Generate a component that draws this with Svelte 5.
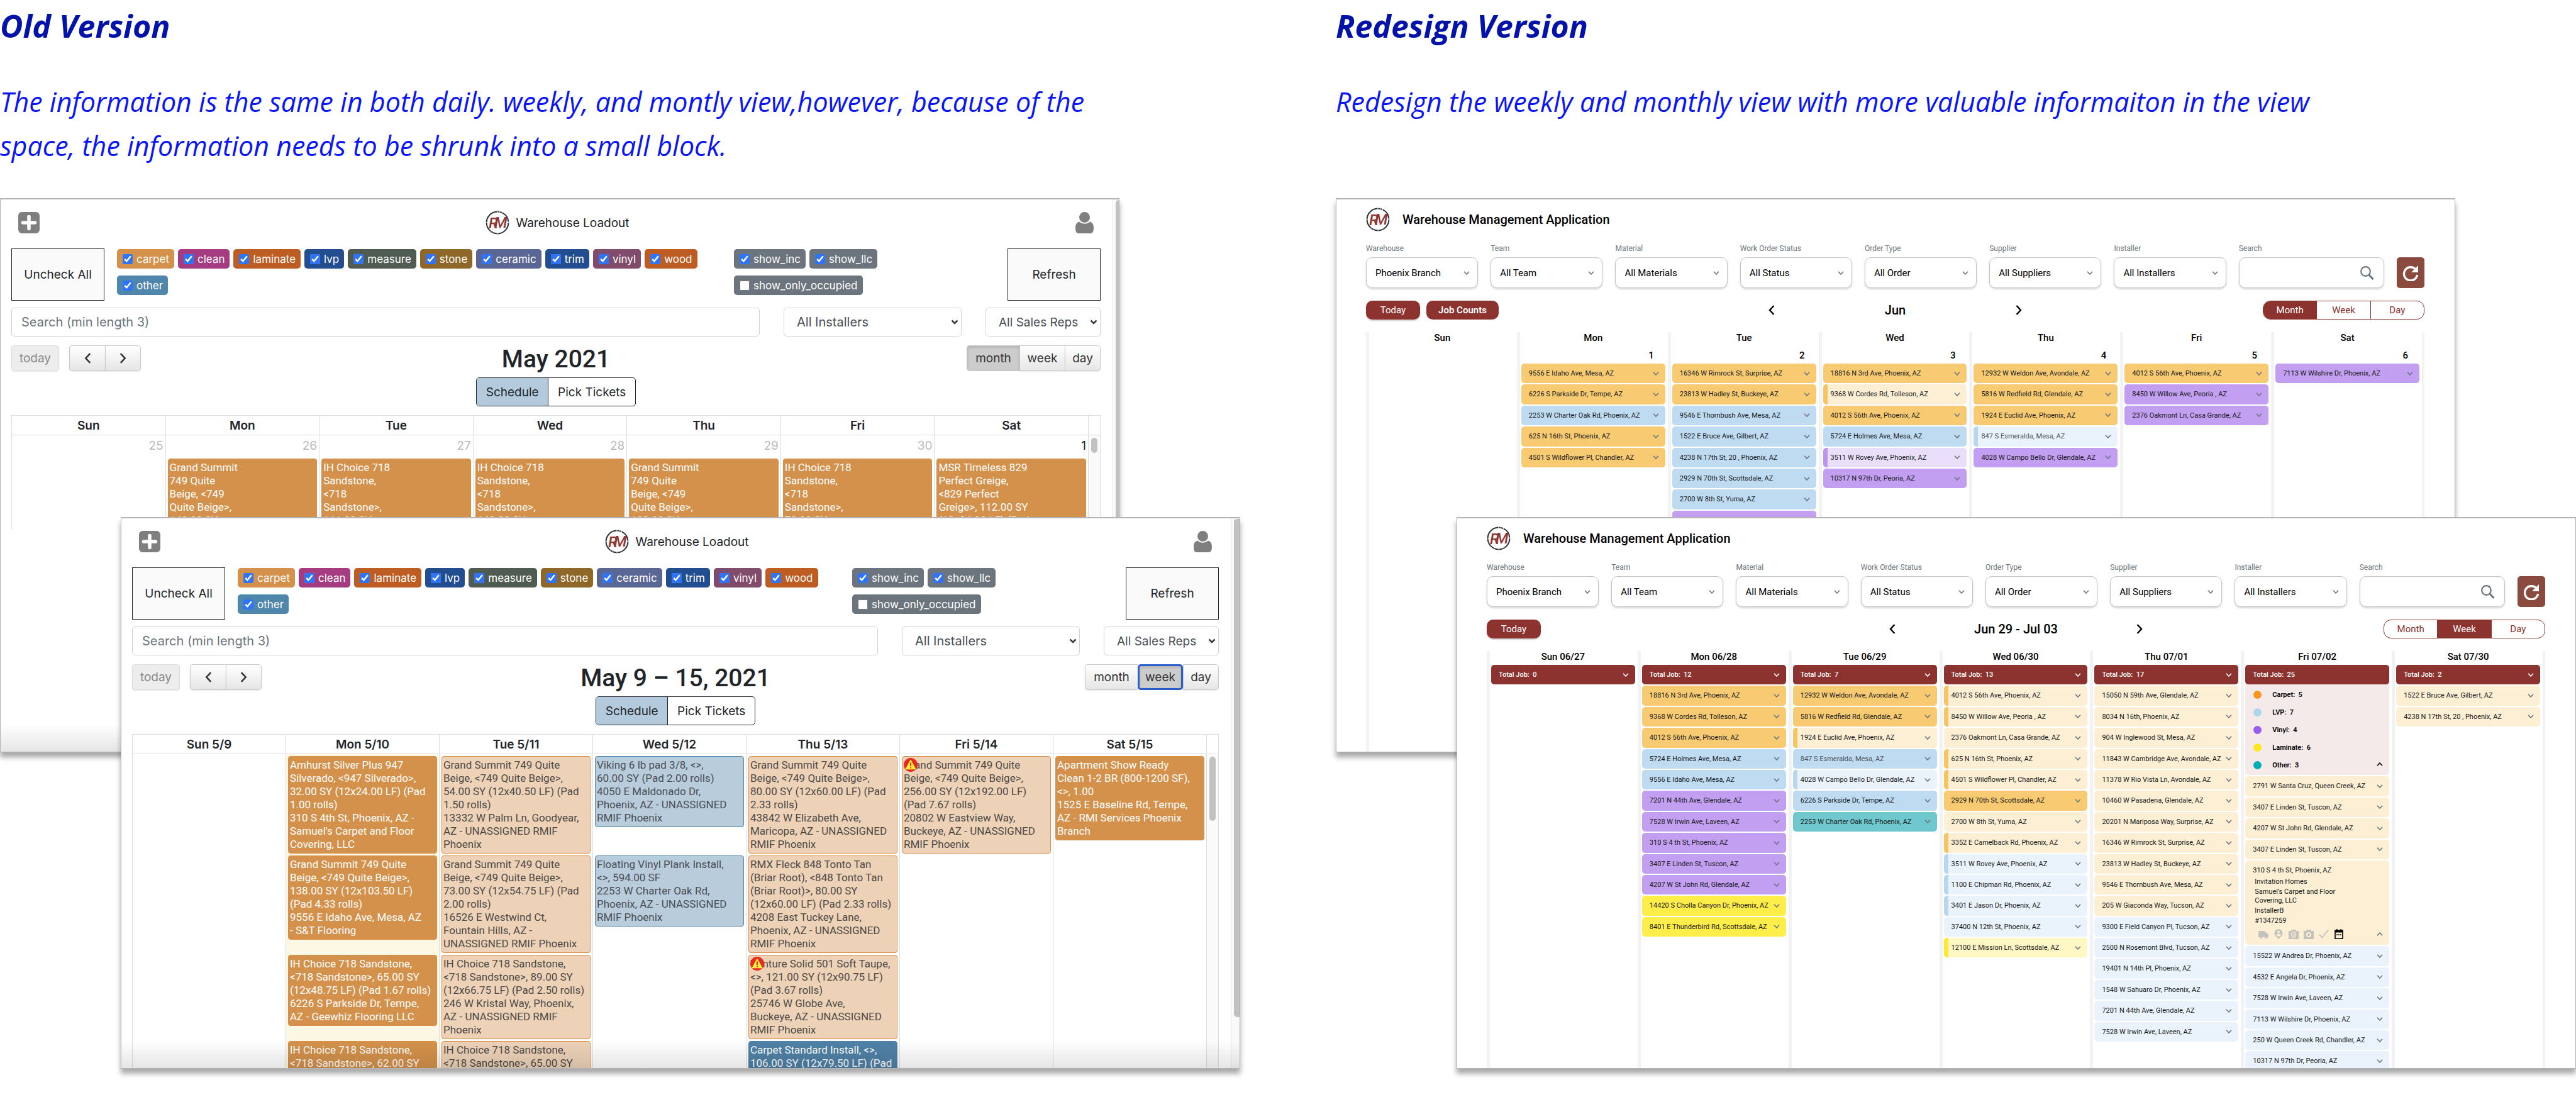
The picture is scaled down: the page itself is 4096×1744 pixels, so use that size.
<script>
  const kinds = [
    { name: 'carpet', color: '#d3914b' },
    { name: 'clean', color: '#a53c82' },
    { name: 'laminate', color: '#bd5d24' },
    { name: 'lvp', color: '#224d8f' },
    { name: 'measure', color: '#505c52' },
    { name: 'stone', color: '#8f6729' },
    { name: 'ceramic', color: '#5a6794' },
    { name: 'trim', color: '#224d8f' },
    { name: 'vinyl', color: '#814b6b' },
    { name: 'wood', color: '#bd5d24' },
    { name: 'other', color: '#4f86ab' }
  ];
  const options = [
    { name: 'show_inc', on: true },
    { name: 'show_llc', on: true },
    { name: 'show_only_occupied', on: false }
  ];

  const oldMonth = {
    id: 'old-month',
    title: 'May 2021',
    view: 'month',
    days: ['Sun', 'Mon', 'Tue', 'Wed', 'Thu', 'Fri', 'Sat'],
    rows: [
      [
        { num: '25', out: true },
        { num: '26', out: true, tone: 'solid', text: 'Grand Summit\n749 Quite\nBeige, <749\nQuite Beige>,\n140.00 SY' },
        { num: '27', out: true, tone: 'solid', text: 'IH Choice 718\nSandstone,\n<718\nSandstone>,\n111.00 SY' },
        { num: '28', out: true, tone: 'solid', text: 'IH Choice 718\nSandstone,\n<718\nSandstone>,\n140.00 SY' },
        { num: '29', out: true, tone: 'solid', text: 'Grand Summit\n749 Quite\nBeige, <749\nQuite Beige>,\n100.00 SY' },
        { num: '30', out: true, tone: 'solid', text: 'IH Choice 718\nSandstone,\n<718\nSandstone>,\n70.00 SY' },
        { num: '1', tone: 'solid', text: 'MSR Timeless 829\nPerfect Greige,\n<829 Perfect\nGreige>, 112.00 SY\n(12x84.00 LF) (Pad' }
      ]
    ]
  };

  const oldWeek = {
    id: 'old-week',
    title: 'May 9 – 15, 2021',
    view: 'week',
    days: ['Sun 5/9', 'Mon 5/10', 'Tue 5/11', 'Wed 5/12', 'Thu 5/13', 'Fri 5/14', 'Sat 5/15'],
    rows: [
      [
        {},
        { tone: 'solid', text: "Amhurst Silver Plus 947\nSilverado, <947 Silverado>,\n32.00 SY (12x24.00 LF) (Pad\n1.00 rolls)\n310 S 4th St, Phoenix, AZ -\nSamuel's Carpet and Floor\nCovering, LLC" },
        { tone: 'pale', text: 'Grand Summit 749 Quite\nBeige, <749 Quite Beige>,\n54.00 SY (12x40.50 LF) (Pad\n1.50 rolls)\n13332 W Palm Ln, Goodyear,\nAZ - UNASSIGNED RMIF\nPhoenix' },
        { tone: 'sky', text: 'Viking 6 lb pad 3/8, <>,\n60.00 SY (Pad 2.00 rolls)\n4050 E Maldonado Dr,\nPhoenix, AZ - UNASSIGNED\nRMIF Phoenix' },
        { tone: 'pale', text: 'Grand Summit 749 Quite\nBeige, <749 Quite Beige>,\n80.00 SY (12x60.00 LF) (Pad\n2.33 rolls)\n43842 W Elizabeth Ave,\nMaricopa, AZ - UNASSIGNED\nRMIF Phoenix' },
        { tone: 'pale', warn: true, text: 'Grand Summit 749 Quite\nBeige, <749 Quite Beige>,\n256.00 SY (12x192.00 LF)\n(Pad 7.67 rolls)\n20802 W Eastview Way,\nBuckeye, AZ - UNASSIGNED\nRMIF Phoenix' },
        { tone: 'solid', text: 'Apartment Show Ready\nClean 1-2 BR (800-1200 SF),\n<>, 1.00\n1525 E Baseline Rd, Tempe,\nAZ - RMI Services Phoenix\nBranch' }
      ],
      [
        {},
        { tone: 'solid', text: 'Grand Summit 749 Quite\nBeige, <749 Quite Beige>,\n138.00 SY (12x103.50 LF)\n(Pad 4.33 rolls)\n9556 E Idaho Ave, Mesa, AZ\n- S&T Flooring' },
        { tone: 'pale', text: 'Grand Summit 749 Quite\nBeige, <749 Quite Beige>,\n73.00 SY (12x54.75 LF) (Pad\n2.00 rolls)\n16526 E Westwind Ct,\nFountain Hills, AZ -\nUNASSIGNED RMIF Phoenix' },
        { tone: 'sky', text: 'Floating Vinyl Plank Install,\n<>, 594.00 SF\n2253 W Charter Oak Rd,\nPhoenix, AZ - UNASSIGNED\nRMIF Phoenix' },
        { tone: 'pale', text: 'RMX Fleck 848 Tonto Tan\n(Briar Root), <848 Tonto Tan\n(Briar Root)>, 80.00 SY\n(12x60.00 LF) (Pad 2.33 rolls)\n4208 East Tuckey Lane,\nPhoenix, AZ - UNASSIGNED\nRMIF Phoenix' },
        {},
        {}
      ],
      [
        {},
        { tone: 'solid', text: 'IH Choice 718 Sandstone,\n<718 Sandstone>, 65.00 SY\n(12x48.75 LF) (Pad 1.67 rolls)\n6226 S Parkside Dr, Tempe,\nAZ - Geewhiz Flooring LLC' },
        { tone: 'pale', text: 'IH Choice 718 Sandstone,\n<718 Sandstone>, 89.00 SY\n(12x66.75 LF) (Pad 2.50 rolls)\n246 W Kristal Way, Phoenix,\nAZ - UNASSIGNED RMIF\nPhoenix' },
        {},
        { tone: 'pale', warn: true, text: 'Venture Solid 501 Soft Taupe,\n<>, 121.00 SY (12x90.75 LF)\n(Pad 3.67 rolls)\n25746 W Globe Ave,\nBuckeye, AZ - UNASSIGNED\nRMIF Phoenix' },
        {},
        {}
      ],
      [
        {},
        { tone: 'solid', text: 'IH Choice 718 Sandstone,\n<718 Sandstone>, 62.00 SY' },
        { tone: 'pale', text: 'IH Choice 718 Sandstone,\n<718 Sandstone>, 65.00 SY' },
        {},
        { tone: 'blue', text: 'Carpet Standard Install, <>,\n106.00 SY (12x79.50 LF) (Pad' },
        {},
        {}
      ]
    ]
  };

  const filters = [
    ['Warehouse', 'Phoenix Branch'],
    ['Team', 'All Team'],
    ['Material', 'All Materials'],
    ['Work Order Status', 'All Status'],
    ['Order Type', 'All Order'],
    ['Supplier', 'All Suppliers'],
    ['Installer', 'All Installers']
  ];

  const jobs = (tone, ...list) => list.map((address) => ({ tone, address }));

  const newMonth = {
    id: 'new-month',
    title: 'Jun',
    view: 'Month',
    days: [
      { name: 'Sun', jobs: [] },
      {
        name: 'Mon',
        num: 1,
        jobs: [
          ...jobs('amber', '9556 E Idaho Ave, Mesa, AZ', '6226 S Parkside Dr, Tempe, AZ'),
          ...jobs('sky', '2253 W Charter Oak Rd, Phoenix, AZ'),
          ...jobs('amber', '625 N 16th St, Phoenix, AZ', '4501 S Wildflower Pl, Chandler, AZ')
        ]
      },
      {
        name: 'Tue',
        num: 2,
        jobs: [
          ...jobs('amber', '16346 W Rimrock St, Surprise, AZ', '23813 W Hadley St, Buckeye, AZ'),
          ...jobs('sky', '9546 E Thornbush Ave, Mesa, AZ', '1522 E Bruce Ave, Gilbert, AZ', '4238 N 17th St, 20 , Phoenix, AZ', '2929 N 70th St, Scottsdale, AZ', '2700 W 8th St, Yuma, AZ'),
          ...jobs('violet', '7201 N 44th Ave, Glendale, AZ')
        ]
      },
      {
        name: 'Wed',
        num: 3,
        jobs: [
          ...jobs('amber', '18816 N 3rd Ave, Phoenix, AZ'),
          ...jobs('amber-light stripe', '9368 W Cordes Rd, Tolleson, AZ'),
          ...jobs('amber', '4012 S 56th Ave, Phoenix, AZ'),
          ...jobs('sky', '5724 E Holmes Ave, Mesa, AZ'),
          ...jobs('violet-light stripe', '3511 W Rovey Ave, Phoenix, AZ'),
          ...jobs('violet', '10317 N 97th Dr, Peoria, AZ')
        ]
      },
      {
        name: 'Thu',
        num: 4,
        jobs: [
          ...jobs('amber', '12932 W Weldon Ave, Avondale, AZ', '5816 W Redfield Rd, Glendale, AZ', '1924 E Euclid Ave, Phoenix, AZ'),
          ...jobs('sky-light stripe muted', '847 S Esmeralda, Mesa, AZ'),
          ...jobs('violet', '4028 W Campo Bello Dr, Glendale, AZ')
        ]
      },
      {
        name: 'Fri',
        num: 5,
        jobs: [
          ...jobs('amber', '4012 S 56th Ave, Phoenix, AZ'),
          ...jobs('violet', '8450 W Willow Ave, Peoria , AZ', '2376 Oakmont Ln, Casa Grande, AZ')
        ]
      },
      { name: 'Sat', num: 6, jobs: jobs('violet', '7113 W Wilshire Dr, Phoenix, AZ') }
    ]
  };

  const newWeek = {
    id: 'new-week',
    title: 'Jun 29 - Jul 03',
    view: 'Week',
    days: [
      { name: 'Sun 06/27', total: 0, jobs: [] },
      {
        name: 'Mon 06/28',
        total: 12,
        jobs: [
          ...jobs('amber', '18816 N 3rd Ave, Phoenix, AZ', '9368 W Cordes Rd, Tolleson, AZ', '4012 S 56th Ave, Phoenix, AZ'),
          ...jobs('sky', '5724 E Holmes Ave, Mesa, AZ', '9556 E Idaho Ave, Mesa, AZ'),
          ...jobs('violet', '7201 N 44th Ave, Glendale, AZ', '7528 W Irwin Ave, Laveen, AZ', '310 S 4 th St, Phoenix, AZ', '3407 E Linden St, Tuscon, AZ', '4207 W St John Rd, Glendale, AZ'),
          ...jobs('lemon', '14420 S Cholla Canyon Dr, Phoenix, AZ', '8401 E Thunderbird Rd, Scottsdale, AZ')
        ]
      },
      {
        name: 'Tue 06/29',
        total: 7,
        jobs: [
          ...jobs('amber', '12932 W Weldon Ave, Avondale, AZ', '5816 W Redfield Rd, Glendale, AZ'),
          ...jobs('amber-light stripe', '1924 E Euclid Ave, Phoenix, AZ'),
          ...jobs('sky muted', '847 S Esmeralda, Mesa, AZ'),
          ...jobs('sky-light stripe', '4028 W Campo Bello Dr, Glendale, AZ'),
          ...jobs('sky', '6226 S Parkside Dr, Tempe, AZ'),
          ...jobs('teal', '2253 W Charter Oak Rd, Phoenix, AZ')
        ]
      },
      {
        name: 'Wed 06/30',
        total: 13,
        jobs: [
          ...jobs('amber-light stripe', '4012 S 56th Ave, Phoenix, AZ', '8450 W Willow Ave, Peoria , AZ'),
          ...jobs('amber-light', '2376 Oakmont Ln, Casa Grande, AZ'),
          ...jobs('amber-light stripe', '625 N 16th St, Phoenix, AZ', '4501 S Wildflower Pl, Chandler, AZ'),
          ...jobs('amber', '2929 N 70th St, Scottsdale, AZ'),
          ...jobs('amber-light', '2700 W 8th St, Yuma, AZ'),
          ...jobs('amber-light stripe', '3352 E Camelback Rd, Phoenix, AZ'),
          ...jobs('sky-light stripe', '3511 W Rovey Ave, Phoenix, AZ', '1100 E Chipman Rd, Phoenix, AZ', '3401 E Jason Dr, Phoenix, AZ'),
          ...jobs('sky-light', '37400 N 12th St, Phoenix, AZ'),
          ...jobs('lemon-light stripe', '12100 E Mission Ln, Scottsdale, AZ')
        ]
      },
      {
        name: 'Thu 07/01',
        total: 17,
        jobs: [
          ...jobs('amber-light', '15050 N 59th Ave, Glendale, AZ', '8034 N 16th, Phoenix, AZ', '904 W Inglewood St, Mesa, AZ', '11843 W Cambridge Ave, Avondale, AZ', '11378 W Rio Vista Ln, Avondale, AZ', '10460 W Pasadena, Glendale, AZ', '20201 N Mariposa Way, Surprise, AZ', '16346 W Rimrock St, Surprise, AZ', '23813 W Hadley St, Buckeye, AZ', '9546 E Thornbush Ave, Mesa, AZ', '205 W Giaconda Way, Tucson, AZ'),
          ...jobs('sky-light', '9300 E Field Canyon Pl, Tucson, AZ', '2500 N Rosemont Blvd, Tucson, AZ', '19401 N 14th Pl, Phoenix, AZ', '1548 W Sahuaro Dr, Phoenix, AZ', '7201 N 44th Ave, Glendale, AZ', '7528 W Irwin Ave, Laveen, AZ')
        ]
      },
      {
        name: 'Fri 07/02',
        total: 25,
        counts: [
          ['Carpet', 5, '#f9941e'],
          ['LVP', 7, '#aed5ee'],
          ['Vinyl', 4, '#985eeb'],
          ['Laminate', 6, '#ffe81d'],
          ['Other', 3, '#00acb8']
        ],
        jobs: [
          ...jobs('amber-light', '2791 W Santa Cruz, Queen Creek, AZ', '3407 E Linden St, Tuscon, AZ', '4207 W St John Rd, Glendale, AZ', '3407 E Linden St, Tuscon, AZ'),
          {
            tone: 'amber-light',
            address: '310 S 4 th St, Phoenix, AZ',
            details: ['Invitation Homes', 'Samuel’s Carpet and Floor\nCovering, LLC', 'InstallerB', '#1347259']
          },
          ...jobs('sky-light', '15522 W Andrea Dr, Phoenix, AZ', '4532 E Angela Dr, Phoenix, AZ', '7528 W Irwin Ave, Laveen, AZ', '7113 W Wilshire Dr, Phoenix, AZ', '250 W Queen Creek Rd, Chandler, AZ', '10317 N 97th Dr, Peoria, AZ')
        ]
      },
      { name: 'Sat 07/30', total: 2, jobs: jobs('amber-light', '1522 E Bruce Ave, Gilbert, AZ', '4238 N 17th St, 20 , Phoenix, AZ') }
    ]
  };
</script>

{#snippet logo()}
  <svg class="logo" viewBox="0 0 38 38" aria-label="RM" role="img">
    <circle cx="19" cy="19" r="17.4" fill="none" stroke="#2b3239" stroke-width="2" pathLength="360" stroke-dasharray="88 3 22 2 12 2 50 3 86 3 10 3 10 3 58 5" />
    <g fill="#8f3531" font-family="Roboto, sans-serif" font-style="italic" font-weight="500" font-size="24">
      <text x="5" y="28">R</text>
      <text x="14" y="27">M</text>
    </g>
  </svg>
{/snippet}

{#snippet chevron(dir)}
  <svg class="chev {dir}" viewBox="0 0 10 6" aria-hidden="true"><path d="M1 .7 5 5 9 .7" fill="none" stroke="currentColor" stroke-width="1.6" /></svg>
{/snippet}

{#snippet arrow(dir)}
  <svg class="arrow" viewBox="0 0 10 16" aria-hidden="true">
    <path d={dir === 'prev' ? 'M8.5 1 2 8l6.500 7' : 'M1.500 1 8 8l-6.500 7'} fill="none" stroke="currentColor" stroke-width="2.4" />
  </svg>
{/snippet}

{#snippet oldWindow(cal)}
  <article class="window old {cal.id}">
    <div class="pane">
      <header class="old-head">
        <button class="icon" aria-label="Add">
          <svg viewBox="0 0 34 34"><rect width="34" height="34" rx="6" fill="#7f7f7f" /><path d="M17 7.500v19M7.500 17h19" stroke="#fff" stroke-width="5.500" stroke-linecap="round" /></svg>
        </button>
        <div class="old-brand">{@render logo()}<span>Warehouse Loadout</span></div>
        <button class="icon person" aria-label="Account">
          <svg viewBox="0 0 29 34"><circle cx="14.500" cy="8.500" r="8.500" fill="#7f7f7f" /><path d="M6 15.500c2 2 5 3.200 8.500 3.200s6.500-1.200 8.500-3.200c3.500.8 6 4 6 9.500 0 6-1.500 9-5 9H5c-3.500 0-5-3-5-9 0-5.500 2.500-8.700 6-9.500z" fill="#7f7f7f" /></svg>
        </button>
      </header>

      <div class="old-filters">
        <button class="big">Uncheck All</button>
        <div class="badges">
          {#each kinds as kind}
            <label class="badge" style="background:{kind.color}"><input type="checkbox" checked />{kind.name}</label>
          {/each}
        </div>
        <div class="badges extra">
          {#each options as option}
            <label class="badge"><input type="checkbox" checked={option.on} />{option.name}</label>
          {/each}
        </div>
        <button class="big">Refresh</button>
      </div>

      <div class="old-search">
        <input type="text" placeholder="Search (min length 3)" aria-label="Search" />
        {#each ['All Installers', 'All Sales Reps'] as name}
          <div class="pick">
            <select aria-label={name}><option>{name}</option></select>
            <svg viewBox="0 0 12 8" aria-hidden="true"><path d="M1.500 1.500 6 6l4.500-4.500" fill="none" stroke="#343a40" stroke-width="2.600" /></svg>
          </div>
        {/each}
      </div>

      <div class="old-toolbar">
        <div class="side">
          <button class="fc" disabled>today</button>
          <div class="group arrows">
            <button class="fc" aria-label="Previous">{@render arrow('prev')}</button>
            <button class="fc" aria-label="Next">{@render arrow('next')}</button>
          </div>
        </div>
        <h2>{cal.title}</h2>
        <div class="side end">
          <div class="group views">
            {#each ['month', 'week', 'day'] as view}
              <button class="fc" class:active={view === cal.view}>{view}</button>
            {/each}
          </div>
        </div>
      </div>

      <div class="toggle">
        <button class="on">Schedule</button>
        <button>Pick Tickets</button>
      </div>

      <table>
        <thead>
          <tr>
            {#each cal.days as day}<th>{day}</th>{/each}
            <th class="rail" aria-label="Scroll"></th>
          </tr>
        </thead>
        <tbody>
          {#each cal.rows as row, r}
            <tr>
              {#each row as cell}
                <td>
                  {#if cell.num}<div class="num" class:out={cell.out}>{cell.num}</div>{/if}
                  {#if cell.text}
                    <div class="event {cell.tone}">{cell.text}{#if cell.warn}<svg class="warn" viewBox="0 0 22 22" aria-label="Warning" role="img">
                          <circle cx="11" cy="11" r="11" fill="#e8291c" />
                          <path d="M11 3.500 18.500 17.500h-15z" fill="#ffee3a" stroke="#ffee3a" stroke-width="1.500" stroke-linejoin="round" />
                          <path d="M11 7.500v5.500M11 14.500v2" stroke="#e8291c" stroke-width="2" />
                        </svg>{/if}</div>
                  {/if}
                </td>
              {/each}
              {#if r === 0}<td class="rail" rowspan={cal.rows.length}><div class="thumb"></div></td>{/if}
            </tr>
          {/each}
        </tbody>
      </table>
    </div>
    <div class="scroll"><div class="thumb"></div></div>
  </article>
{/snippet}

{#snippet job(item)}
  {#if item.details}
    <div class="card open {item.tone}">
      <span>{item.address}</span>
      <div class="details">
        {#each item.details as line}<p>{line}</p>{/each}
      </div>
      <div class="tools">
        <svg viewBox="0 0 16 16"><path d="M0 3h10.500v2.500h2.500l3 3.500v4h-1.500a2 2 0 0 1-4 0H6a2 2 0 0 1-4 0H0z" fill="#c4c2be" /></svg>
        <svg viewBox="0 0 16 16"><path d="M8 0a6.500 6.500 0 0 1 6.500 6.500c0 3-1.800 5-3.700 6.300L8 16l-2.800-3.200C3.300 11.500 1.500 9.500 1.500 6.500A6.500 6.500 0 0 1 8 0z" fill="#c4c2be" /><circle cx="8" cy="4.500" r="2" fill="#fcefd4" /><path d="M4 9.500c1-2.500 7-2.500 8 0-2 3-6 3-8 0z" fill="#fcefd4" /></svg>
        <svg viewBox="0 0 16 16"><path d="M0 3h4l1-2h6l1 2h4v13H0z" fill="#c4c2be" /><ellipse cx="8" cy="9" rx="3.500" ry="4.300" fill="none" stroke="#fcefd4" stroke-width="1.300" /><path d="M8.500 7v4.500" stroke="#fcefd4" stroke-width="1.600" /></svg>
        <svg viewBox="0 0 16 16"><path d="M0 3h4l1-2h6l1 2h4v13H0z" fill="#c4c2be" /><circle cx="8" cy="9" r="3" fill="none" stroke="#fcefd4" stroke-width="2" /></svg>
        <svg viewBox="0 0 16 16"><path d="M1 9l4.500 4.500L15 1.500" fill="none" stroke="#c4c2be" stroke-width="1.800" /></svg>
        <svg viewBox="0 0 16 16"><path d="M2 2.500h12v12.700H2z" fill="none" stroke="#000" stroke-width="1.600" /><path d="M1.500 1.500h13v4h-13zM4 0h1.600v2H4zm6.400 0H12v2h-1.600z" fill="#000" /><path d="M4 9h2m1 0h2m1 0h2" stroke="#000" stroke-width="1.600" /></svg>
        <button aria-label="Collapse">{@render chevron('up')}</button>
      </div>
    </div>
  {:else}
    <button class="card {item.tone}"><span>{item.address}</span>{@render chevron('down')}</button>
  {/if}
{/snippet}

{#snippet newWindow(cal)}
  <article class="window new {cal.id}">
    <header class="new-head">{@render logo()}<h2>Warehouse Management Application</h2></header>

    <div class="new-filters">
      {#each filters as [label, value], i}
        <div class="field">
          <label for="{cal.id}-{i}">{label}</label>
          <div class="pick">
            <select id="{cal.id}-{i}"><option>{value}</option></select>
            {@render chevron('down')}
          </div>
        </div>
      {/each}
      <div class="field find">
        <label for="{cal.id}-search">Search</label>
        <div class="pick">
          <input id="{cal.id}-search" type="text" />
          <svg class="glass" viewBox="0 0 22 22" aria-hidden="true"><circle cx="8.500" cy="8.500" r="7.300" fill="none" stroke="#6c757d" stroke-width="2.200" /><path d="M13.500 13.500 20.500 21" stroke="#6c757d" stroke-width="3" /></svg>
        </div>
      </div>
      <button class="reload" aria-label="Reload">
        <svg viewBox="0 0 26 26"><path d="M20.500 6.700A10.600 10.600 0 1 0 23.600 16" fill="none" stroke="#fff" stroke-width="3.400" /><path d="M25 1v11H14z" fill="#fff" /></svg>
      </button>
    </div>

    <div class="new-toolbar">
      <div class="side">
        <button class="pill">Today</button>
        {#if cal.view === 'Month'}<button class="pill strong">Job Counts</button>{/if}
      </div>
      <div class="nav">
        <button aria-label="Previous">{@render arrow('prev')}</button>
        <h3>{cal.title}</h3>
        <button aria-label="Next">{@render arrow('next')}</button>
      </div>
      <div class="side end">
        <div class="segment">
          {#each ['Month', 'Week', 'Day'] as view}
            <button class:active={view === cal.view}>{view}</button>
          {/each}
        </div>
      </div>
    </div>

    <div class="days">
      {#each cal.days as day}
        <section class="day">
          <h4>{day.name}</h4>
          {#if cal.view === 'Month'}<div class="date">{day.num ?? ''}</div>{/if}
          <div class="list">
            {#if day.counts}
              <div class="summary">
                <div class="card total"><span>Total Job:&nbsp; {day.total}</span></div>
                <ul>
                  {#each day.counts as [name, count, color]}
                    <li><i style="background:{color}"></i>{name}:&nbsp; {count}</li>
                  {/each}
                </ul>
                <button class="fold" aria-label="Collapse">{@render chevron('up')}</button>
              </div>
            {:else if day.total !== undefined}
              <button class="card total"><span>Total Job:&nbsp; {day.total}</span>{@render chevron('down')}</button>
            {/if}
            {#each day.jobs as item}{@render job(item)}{/each}
          </div>
        </section>
      {/each}
    </div>
  </article>
{/snippet}

<main>
  <section class="board">
    <div class="intro">
      <h1>Old Version</h1>
      <p>The information is the same in both daily. weekly, and montly view,however, because of the<br />space, the information needs to be shrunk into a small block.</p>
    </div>
    <div class="desk">
      {@render oldWindow(oldMonth)}
      {@render oldWindow(oldWeek)}
    </div>
  </section>
  <section class="board">
    <div class="intro">
      <h1>Redesign Version</h1>
      <p>Redesign the weekly and monthly view with more valuable informaiton in the view</p>
    </div>
    <div class="desk">
      {@render newWindow(newMonth)}
      {@render newWindow(newWeek)}
    </div>
  </section>
</main>

<style>
  :global(body) {
    margin: 0;
    background: #fff;
  }
  main {
    display: grid;
    grid-template-columns: 1fr 1fr;
    gap: 152px;
    overflow: hidden;
  }
  .board {
    min-width: 0;
  }
  h1, h2, h3, h4, p, ul {
    margin: 0;
    padding: 0;
  }
  button, input, select {
    font: inherit;
    color: inherit;
    margin: 0;
    box-sizing: border-box;
  }
  button {
    background: none;
    border: 0;
    padding: 0;
    cursor: pointer;
  }
  select {
    appearance: none;
    cursor: pointer;
  }
  svg {
    display: block;
    flex: none;
  }

  .intro {
    height: 315px;
    box-sizing: border-box;
    font-family: 'Open Sans', sans-serif;
    font-style: italic;
  }
  .intro h1 {
    padding-top: 8px;
    font-size: 50px;
    line-height: 66px;
    font-weight: 700;
    color: #0312a8;
  }
  .intro p {
    padding-top: 53px;
    font-size: 43px;
    line-height: 70px;
    color: #0b16f5;
    white-space: nowrap;
  }

  /* Overlapping windows on a free desk */
  .desk {
    position: relative;
    height: 1429px;
  }
  .window {
    position: absolute;
    left: 0;
    top: 0;
    width: calc(100% - 192px);
    height: 881px;
    box-sizing: border-box;
    overflow: hidden;
    background: #fff;
    border: 1px solid #b4b4b4;
    border-top-width: 2px;
    box-shadow: 0 8px 8px rgba(0, 0, 0, 0.34);
  }
  .window + .window {
    left: 192px;
    top: 507px;
    height: 877px;
  }

  .logo {
    width: 38px;
    height: 38px;
  }

  /* Old design */
  .old {
    display: flex;
    font-family: Inter, sans-serif;
    font-size: 19px;
    color: #212529;
  }
  .old::after {
    content: '';
    position: absolute;
    inset: auto 0 0 0;
    height: 44px;
    background: linear-gradient(transparent, rgba(0, 0, 0, 0.1));
    pointer-events: none;
  }
  .pane {
    flex: 1;
    min-width: 0;
    padding: 0 19px 0 17px;
  }
  .scroll {
    width: 14px;
    box-sizing: border-box;
    border-left: 1px solid #e6e6e6;
    background: #fafafa;
    padding: 1px 0 0 4px;
  }
  .old-month .scroll {
    width: 10px;
  }
  .scroll .thumb {
    height: 792px;
    background: #c1c1c1;
    border-radius: 5px 0 0 5px;
  }
  .old-head {
    display: flex;
    justify-content: space-between;
    align-items: center;
    height: 38px;
    padding: 18px 11px 22px;
  }
  .icon svg {
    width: 34px;
    height: 34px;
  }
  .icon.person svg {
    width: 29px;
  }
  .old-brand {
    display: flex;
    align-items: center;
    gap: 10px;
  }
  .old-filters {
    display: flex;
    gap: 20px;
    height: 83px;
  }
  .big {
    width: 148px;
    flex: none;
    border: 1px solid #212529;
    background: #fafafa;
  }
  .badges {
    flex: 1;
    display: flex;
    flex-wrap: wrap;
    align-content: flex-start;
    gap: 11px 6px;
    padding-top: 1px;
  }
  .badges.extra {
    flex: 0 0 320px;
    padding-right: 95px;
  }
  .badge {
    display: flex;
    align-items: center;
    gap: 6px;
    height: 31px;
    padding: 0 8px 0 9px;
    border-radius: 5px;
    background: #6c757d;
    color: #fff;
    font-size: 17px;
    line-height: 20px;
  }
  .badge input {
    width: 16px;
    height: 16px;
    accent-color: #2f73f6;
  }
  .old-search {
    display: flex;
    gap: 38px;
    margin-top: 11px;
    height: 46px;
    font-size: 20px;
  }
  .old-search input,
  .old-search select {
    width: 100%;
    height: 46px;
    border: 1px solid #ced4da;
    border-radius: 5px;
    background: #fff;
    color: #495057;
    padding: 0 15px;
  }
  .old-search input {
    flex: 1;
  }
  .old-search input::placeholder {
    color: #6c757d;
    opacity: 1;
  }
  .old-search select {
    padding: 0 20px;
  }
  .old-search .pick {
    width: 283px;
  }
  .old-search .pick:last-child {
    width: 183px;
    font-size: 19px;
  }
  .pick {
    display: grid;
    align-items: center;
  }
  .pick > :global(*) {
    grid-area: 1 / 1;
  }
  .old-search .pick svg {
    width: 12px;
    height: 8px;
    justify-self: end;
    margin-right: 5px;
    pointer-events: none;
  }
  .old-toolbar {
    display: grid;
    grid-template-columns: 1fr auto 1fr;
    align-items: center;
    margin-top: 11px;
    height: 41px;
  }
  .old-toolbar h2 {
    padding-top: 5px;
    font-family: Roboto, sans-serif;
    font-size: 39px;
    line-height: 41px;
    font-weight: 500;
  }
  .side {
    display: flex;
    gap: 16px;
  }
  .side.end {
    justify-content: flex-end;
  }
  .fc {
    height: 41px;
    width: 76px;
    border: 1px solid #c9c9c9;
    border-radius: 5px;
    background: linear-gradient(#fff, #e6e6e6);
    color: #333;
    box-shadow: 0 1px 2px rgba(0, 0, 0, 0.1);
    display: grid;
    place-items: center;
  }
  .fc:disabled {
    background: #ededed;
    color: #888;
    border-color: #dcdcdc;
  }
  .group {
    display: flex;
  }
  .group .fc {
    border-radius: 0;
    border-right-width: 0;
    width: 57px;
  }
  .group .fc:first-child {
    border-radius: 5px 0 0 5px;
  }
  .group .fc:last-child {
    border-radius: 0 5px 5px 0;
    border-right-width: 1px;
  }
  .views .fc:nth-child(1) {
    width: 84px;
  }
  .views .fc:nth-child(2) {
    width: 72px;
  }
  .fc :global(.arrow) {
    width: 11px;
    height: 17px;
  }
  .views .fc.active {
    background: #ccc;
    box-shadow: inset 0 2px 4px rgba(0, 0, 0, 0.15);
  }
  .old-week .views .fc.active {
    border: 3px solid #2a5fc9;
    border-radius: 5px;
  }
  .toggle {
    display: flex;
    width: 254px;
    height: 46px;
    box-sizing: border-box;
    margin: 13px auto 0;
    border: 1px solid #212529;
    border-radius: 5px;
    overflow: hidden;
  }
  .toggle button {
    flex: 1 1 auto;
  }
  .toggle .on {
    background: #b2cadb;
    border-right: 1px solid #212529;
  }
  table {
    width: 100%;
    table-layout: fixed;
    border-collapse: collapse;
    margin-top: 14px;
  }
  th, td {
    border: 1px solid #ddd;
    padding: 0;
    vertical-align: top;
  }
  th {
    height: 30px;
    font-weight: 600;
    vertical-align: middle;
  }
  th.rail {
    width: 18px;
  }
  tbody td {
    border-top: 0;
    border-bottom: 0;
  }
  .old-week tbody td:nth-child(2) {
    background: #fcf8e3;
  }
  td.rail {
    background: #fafafa;
  }
  td.rail .thumb {
    width: 10px;
    height: 102px;
    margin: 4px 0 0 4px;
    border-radius: 5px;
    background: #c1c1c1;
  }
  .old-month td.rail .thumb {
    height: 24px;
  }
  .num {
    height: 34px;
    line-height: 34px;
    padding-right: 3px;
    text-align: right;
    color: #212529;
  }
  .num.out {
    color: #b9bbbd;
  }
  .event {
    position: relative;
    margin: 3px 3px 0;
    padding: 3px 2px;
    border: 1px solid #d98f45;
    border-radius: 4px;
    font-family: Roboto, sans-serif;
    font-size: 17px;
    line-height: 21px;
    white-space: pre;
  }
  tr:last-child .event {
    min-height: 60px;
  }
  .event.solid {
    background: #d3914b;
    color: #fff;
  }
  .event.pale {
    background: #edd2b8;
    color: #4d4a46;
  }
  .event.sky {
    background: #b8ccdc;
    border-color: #4f86ab;
    color: #4a4f54;
  }
  .event.blue {
    background: #4f81a6;
    border-color: #4f81a6;
    color: #fff;
  }
  .warn {
    position: absolute;
    left: 2px;
    top: 2px;
    width: 22px;
    height: 22px;
  }

  /* Redesign */
  .new {
    padding: 13px 48px 0 47px;
    font-family: Roboto, sans-serif;
    font-size: 15px;
    color: #000;
    display: flex;
    flex-direction: column;
  }
  .new-head {
    display: flex;
    align-items: center;
    gap: 20px;
    height: 38px;
  }
  .new-head h2 {
    font-size: 20px;
    line-height: 24px;
    font-weight: 500;
  }
  .new-filters {
    display: flex;
    gap: 20px;
    align-items: flex-end;
    margin-top: 19px;
  }
  .field {
    flex: 178;
    min-width: 0;
  }
  .field.find {
    flex: 231;
  }
  .field label {
    display: block;
    font-size: 12px;
    line-height: 16px;
    margin-bottom: 6px;
    color: #6c757d;
  }
  .field select,
  .field input {
    width: 100%;
    height: 49px;
    border: 1px solid #c4c4c4;
    border-radius: 10px;
    background: #fff;
    padding: 0 14px;
    box-shadow: 0 2px 3px rgba(0, 0, 0, 0.16);
  }
  .chev {
    width: 10px;
    height: 6px;
    color: #6c757d;
  }
  .chev.up {
    transform: rotate(180deg);
  }
  .field .chev {
    justify-self: end;
    margin-right: 13px;
    pointer-events: none;
  }
  .glass {
    width: 22px;
    height: 22px;
    justify-self: end;
    margin-right: 16px;
    pointer-events: none;
  }
  .reload {
    flex: none;
    width: 44px;
    height: 49px;
    border-radius: 5px;
    background: #8b4a3e;
    display: grid;
    place-items: center;
  }
  .reload svg {
    width: 26px;
    height: 26px;
  }
  .new-toolbar {
    display: grid;
    grid-template-columns: 1fr 403px 1fr;
    align-items: center;
    margin-top: 20px;
    height: 30px;
  }
  .new-toolbar .side {
    gap: 10px;
  }
  .pill {
    width: 86px;
    height: 30px;
    border-radius: 10px;
    background: #8c3330;
    color: #fff;
    box-shadow: 0 2px 2px rgba(0, 0, 0, 0.2);
  }
  .pill.strong {
    width: 115px;
    font-weight: 600;
    box-shadow: none;
  }
  .nav {
    display: flex;
    justify-content: space-between;
    align-items: center;
  }
  .nav .arrow {
    width: 10px;
    height: 16px;
  }
  .nav h3 {
    font-size: 20px;
    line-height: 24px;
    font-weight: 500;
  }
  .segment {
    display: flex;
    width: 257px;
    height: 30px;
    box-sizing: border-box;
    border: 1px solid #8c3330;
    border-radius: 12px;
    overflow: hidden;
    color: #8c3330;
  }
  .segment button {
    flex: 1;
  }
  .segment button + button {
    border-left: 1px solid #8c3330;
  }
  .segment .active {
    background: #8c3330;
    color: #fff;
  }
  .days {
    flex: 1;
    display: grid;
    grid-template-columns: repeat(7, minmax(0, 1fr));
    margin-top: 20px;
    border-right: 4px solid #f1f2f4;
  }
  .day {
    border-left: 5px solid #f1f2f4;
    padding: 0 4px 0 2px;
  }
  .day h4 {
    font-size: 15px;
    line-height: 18px;
    font-weight: 500;
    text-align: center;
  }
  .date {
    height: 18px;
    line-height: 18px;
    margin-top: 10px;
    padding-right: 18px;
    text-align: right;
    font-weight: 500;
  }
  .list {
    display: flex;
    flex-direction: column;
    gap: 2px;
    margin-top: 4px;
  }
  .card {
    display: flex;
    justify-content: space-between;
    align-items: center;
    padding: 8px 10px 8px 12px;
    border-radius: 5px;
    font-size: 11px;
    line-height: 1.4;
    text-align: left;
    white-space: nowrap;
    color: #16181a;
  }
  .card.muted {
    color: #4c5257;
  }
  .amber { background: #f8cb73; --edge: #f8cb73; }
  .amber-light { background: #fcefd4; --edge: #f8c463; }
  .sky { background: #bedbf1; }
  .sky-light { background: #eaf3fb; --edge: #b7d7ef; }
  .violet { background: #c29ff0; }
  .violet-light { background: #eadffa; --edge: #bc96ee; }
  .lemon { background: #ffed4a; }
  .lemon-light { background: #fff7c4; --edge: #ffe833; }
  .teal { background: #6fc8cd; }
  .card.stripe {
    border-left: 7px solid var(--edge);
    padding-left: 5px;
  }
  .card.total {
    background: #8c3330;
    color: #fff;
    font-weight: 500;
  }
  .card.total .chev {
    color: #fff;
  }
  .summary {
    position: relative;
    background: #f4eaea;
    border-radius: 5px;
  }
  .summary ul {
    list-style: none;
    padding: 2px 13px;
  }
  .summary li {
    display: flex;
    align-items: center;
    gap: 17px;
    height: 28px;
    font-size: 11px;
    font-weight: 600;
  }
  .summary i {
    width: 13px;
    height: 13px;
    border-radius: 50%;
  }
  .fold {
    position: absolute;
    right: 10px;
    bottom: 14px;
  }
  .fold .chev {
    color: #000;
  }
  .card.open {
    display: block;
    padding-bottom: 9px;
  }
  .details {
    display: grid;
    gap: 2px;
    padding: 4px 0 6px 3px;
    line-height: 14px;
    white-space: pre;
  }
  .tools {
    display: flex;
    align-items: center;
    gap: 8px;
    padding-left: 9px;
  }
  .tools svg {
    width: 16px;
    height: 16px;
  }
  .tools button {
    margin-left: auto;
  }
  .tools .chev {
    width: 10px;
    height: 6px;
  }
</style>
